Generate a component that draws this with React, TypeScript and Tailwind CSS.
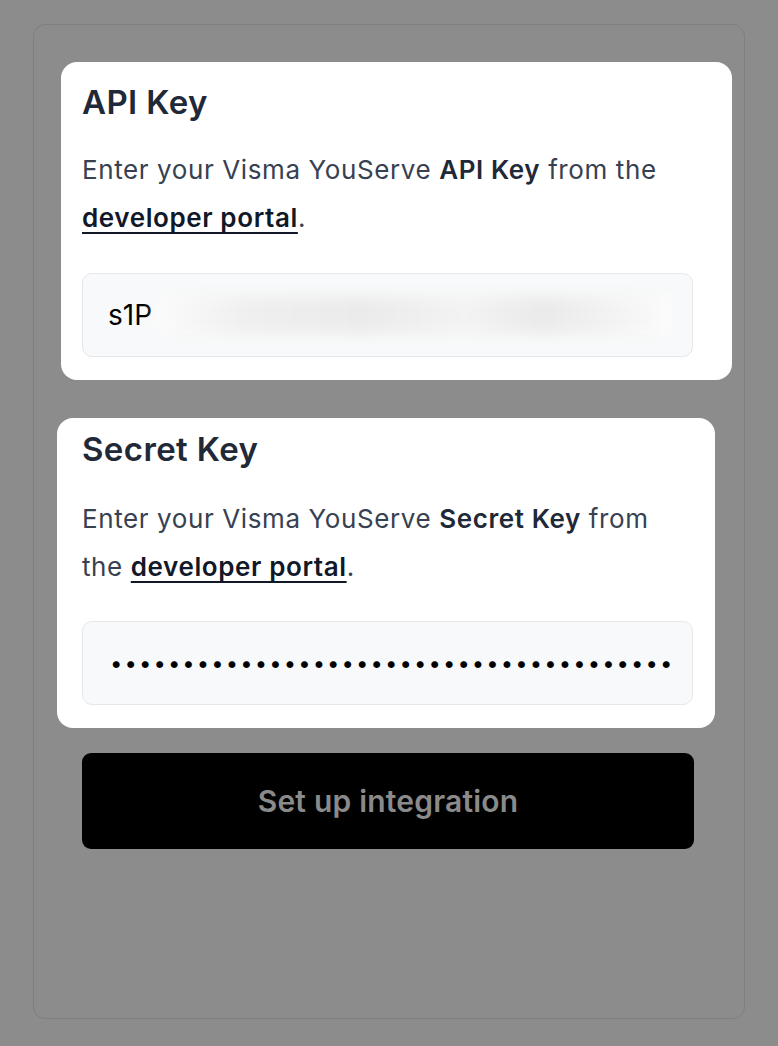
import React from 'react';

const DOTS = '•'.repeat(39);

export default function App() {
	return (
		<div className="min-h-[1046px] w-full bg-[#8c8c8c] pt-6 font-['Inter',sans-serif]">
			<div className="mx-[33px] h-[995px] rounded-[12px] border border-[#7f7f7f] pt-[37px]">
				{/* API key card */}
				<section className="ml-[27px] w-[671px] rounded-[16px] bg-white pt-[18px] pb-[23px] pl-[21px] pr-[39px]">
					<h2 className="text-[33px] leading-[44px] font-semibold text-[#1f2937] tracking-[0.4px]">API Key</h2>
					<p className="mt-[22px] text-[26px] leading-[48px] tracking-[0.6px] text-[#374151]">
						Enter your Visma YouServe <span className="font-semibold text-[#1f2937]">API Key</span> from the{' '}
						<a className="font-semibold text-[#111827] underline decoration-2 underline-offset-[5px]">developer portal</a>.
					</p>
					<div className="mt-[31px] flex h-[84px] items-center rounded-[10px] border border-[#e5e7eb] bg-[#f8f9fa] pl-[25px] pr-[20px]">
						<span className="text-[28px] text-black">s1P</span>
						<div className="ml-1 h-[38px] flex-1 blur-[6px] bg-[linear-gradient(90deg,#fbfbfb_0%,#efefef_18%,#ebebeb_40%,#f3f3f3_60%,#eaeaea_75%,#f7f7f7_95%,#fdfdfd_100%)]" />
					</div>
				</section>

				{/* Secret key card */}
				<section className="mt-[38px] ml-[23px] w-[658px] rounded-[16px] bg-white pt-[9px] pb-[23px] pl-[25px] pr-[22px]">
					<h2 className="text-[33px] leading-[44px] font-semibold text-[#1f2937] tracking-[0.4px]">Secret Key</h2>
					<p className="mt-[24px] max-w-[596px] text-[26px] leading-[48px] tracking-[0.6px] text-[#374151]">
						Enter your Visma YouServe <span className="font-semibold text-[#1f2937]">Secret Key</span> from the{' '}
						<a className="font-semibold text-[#111827] underline decoration-2 underline-offset-[5px]">developer portal</a>.
					</p>
					<div className="mt-[30px] flex h-[84px] items-center overflow-hidden rounded-[10px] border border-[#e5e7eb] bg-[#f8f9fa] pl-[27px] pr-[22px]">
						<span className="whitespace-nowrap text-[22px] tracking-[2.1px] text-black">{DOTS}</span>
					</div>
				</section>

				<button className="mt-[25px] ml-[48px] flex h-[96px] w-[612px] items-center justify-center rounded-[9px] bg-black text-[30px] font-semibold tracking-[0.2px] text-[#8a8a8a]">
					Set up integration
				</button>
			</div>
		</div>
	);
}
